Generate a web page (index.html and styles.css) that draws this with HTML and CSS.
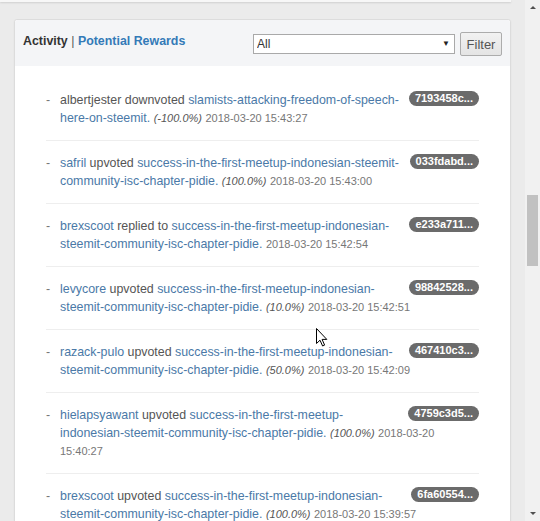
FILE: index.html
```html
<!DOCTYPE html>
<html lang="en">
<head>
  <meta charset="UTF-8" />
  <meta name="viewport" content="width=device-width, initial-scale=1" />
  <title>Account activity</title>
  <link rel="stylesheet" href="styles.css">
</head>
<body>
  <div class="page">
    <div class="prev-panel"></div>

    <div class="panel">
      <div class="panel-heading">
        <div class="tabs">
          <span class="tab-active">Activity</span>
          <span class="tab-sep">|</span>
          <a class="tab" href="#">Potential Rewards</a>
        </div>
        <form class="filter">
          <div class="select-wrap">
            <select>
              <option>All</option>
              <option>Votes</option>
              <option>Comments</option>
            </select>
          </div>
          <button type="button">Filter</button>
        </form>
      </div>

      <div class="panel-body">
        <ul class="activity">
          <li>
            <span class="dash">-</span>
            <div class="entry">
              <span class="tx">7193458c...</span>
              albertjester downvoted <a href="#">slamists-attacking-freedom-of-speech-here-on-steemit.</a>
              <em>(-100.0%)</em> <span class="time">2018-03-20 15:43:27</span>
            </div>
          </li>
          <li>
            <span class="dash">-</span>
            <div class="entry">
              <span class="tx">033fdabd...</span>
              <a href="#">safril</a> upvoted <a href="#">success-in-the-first-meetup-indonesian-steemit-community-isc-chapter-pidie.</a>
              <em>(100.0%)</em> <span class="time">2018-03-20 15:43:00</span>
            </div>
          </li>
          <li>
            <span class="dash">-</span>
            <div class="entry">
              <span class="tx">e233a711...</span>
              <a href="#">brexscoot</a> replied to <a href="#">success-in-the-first-meetup-indonesian-steemit-community-isc-chapter-pidie.</a>
              <span class="time">2018-03-20 15:42:54</span>
            </div>
          </li>
          <li>
            <span class="dash">-</span>
            <div class="entry">
              <span class="tx">98842528...</span>
              <a href="#">levycore</a> upvoted <a href="#">success-in-the-first-meetup-indonesian-steemit-community-isc-chapter-pidie.</a>
              <em>(10.0%)</em> <span class="time">2018-03-20 15:42:51</span>
            </div>
          </li>
          <li>
            <span class="dash">-</span>
            <div class="entry">
              <span class="tx">467410c3...</span>
              <a href="#">razack-pulo</a> upvoted <a href="#">success-in-the-first-meetup-indonesian-steemit-community-isc-chapter-pidie.</a>
              <em>(50.0%)</em> <span class="time">2018-03-20 15:42:09</span>
            </div>
          </li>
          <li>
            <span class="dash">-</span>
            <div class="entry">
              <span class="tx">4759c3d5...</span>
              <a href="#">hielapsyawant</a> upvoted <a href="#">success-in-the-first-meetup-indonesian-steemit-community-isc-chapter-pidie.</a>
              <em>(100.0%)</em> <span class="time">2018-03-20 15:40:27</span>
            </div>
          </li>
          <li>
            <span class="dash">-</span>
            <div class="entry">
              <span class="tx">6fa60554...</span>
              <a href="#">brexscoot</a> upvoted <a href="#">success-in-the-first-meetup-indonesian-steemit-community-isc-chapter-pidie.</a>
              <em>(100.0%)</em> <span class="time">2018-03-20 15:39:57</span>
            </div>
          </li>
        </ul>
      </div>
    </div>
  </div>

  <div class="scrollbar">
    <span class="arrow arrow-up"></span>
    <div class="track"><div class="thumb"></div></div>
    <span class="arrow arrow-down"></span>
  </div>

  <svg class="cursor" width="12" height="19" viewBox="0 0 12 19">
    <path d="M0.5 0.5 L0.5 15.5 L4 12.2 L6.6 18 L8.6 17.1 L6.1 11.4 L10.8 11.4 Z" fill="#fff" stroke="#000" stroke-width="1" stroke-linejoin="round"/>
  </svg>
</body>
</html>
```

FILE: styles.css
```css
html,
body {
  margin: 0;
  height: 100%;
}
body {
  display: flex;
  overflow: hidden;
  background: #ebebeb;
  font-family: "Liberation Sans", Arial, sans-serif;
  color: #555;
}
.page {
  flex: 1;
  overflow: hidden;
}
.prev-panel {
  height: 2px;
  margin-right: 14px;
  background: #f7f7f7;
  box-shadow: 0 1px 2px rgba(0, 0, 0, 0.12);
}
.panel {
  margin: 17px 14px 0 14px;
  background: #fff;
  border: 1px solid #dcdcdc;
  border-radius: 3px;
  box-shadow: 0 1px 2px rgba(0, 0, 0, 0.05);
}
.panel-heading {
  display: flex;
  justify-content: space-between;
  align-items: center;
  padding: 11px 8px 10px 8px;
  background: #f4f5f7;
  border-radius: 3px 3px 0 0;
}
.tabs {
  margin-bottom: 5px;
  font-size: 12.4px;
  font-weight: bold;
  color: #333;
}
.tab-sep {
  font-weight: normal;
  color: #555;
}
.tab {
  color: #337ab7;
  text-decoration: none;
}
.filter {
  display: flex;
  align-items: center;
  gap: 5px;
  margin: 0;
}
.select-wrap {
  position: relative;
}
.select-wrap::after {
  content: "\25BC";
  position: absolute;
  right: 5px;
  top: 5px;
  font-size: 8px;
  color: #222;
  pointer-events: none;
}
.select-wrap select {
  appearance: none;
  -webkit-appearance: none;
  display: block;
  width: 202px;
  height: 20px;
  margin: 0;
  padding: 0 3px;
  border: 1px solid #a9a9a9;
  border-radius: 0;
  background: #fff;
  font-family: inherit;
  font-size: 12px;
  color: #333;
}
.filter button {
  width: 42px;
  height: 24px;
  margin: 1px 0 0 0;
  padding: 0;
  border: 1px solid #acacac;
  border-radius: 2px;
  background: linear-gradient(#f2f2f2, #e4e4e4);
  font-family: inherit;
  font-size: 13px;
  color: #555;
}
.panel-body {
  padding: 12px 31px 0 31px;
}
.activity {
  list-style: none;
  margin: 0;
  padding: 0;
}
.activity li {
  display: flex;
  padding: 13px 0 13px 0;
  border-bottom: 1px solid #eee;
  font-size: 12.4px;
  line-height: 18px;
}
.dash {
  flex: 0 0 14px;
  color: #777;
}
.entry {
  flex: 1;
}
.entry a {
  color: #4a79a7;
  text-decoration: none;
}
.entry em {
  font-size: 11px;
  color: #555;
}
.time {
  font-size: 11px;
  color: #777;
}
.tx {
  float: right;
  margin: 0 0 0 4px;
  padding: 2px 6px 2px 6px;
  border-radius: 8px;
  background: #6b6b6b;
  font-size: 11px;
  font-weight: bold;
  line-height: 11px;
  color: #fff;
}
.scrollbar {
  display: flex;
  flex-direction: column;
  align-items: center;
  flex: 0 0 15px;
  background: #f1f1f1;
}
.arrow {
  width: 0;
  height: 0;
  margin: 6px 0;
  border-left: 3px solid transparent;
  border-right: 3px solid transparent;
}
.arrow-up {
  border-bottom: 3px solid #505050;
}
.arrow-down {
  border-top: 3px solid #505050;
}
.track {
  flex: 1;
  align-self: stretch;
  padding: 180px 2px 0 2px;
}
.thumb {
  height: 71px;
  background: #c1c1c1;
}
.cursor {
  position: absolute;
  left: 316px;
  top: 328px;
}
```
